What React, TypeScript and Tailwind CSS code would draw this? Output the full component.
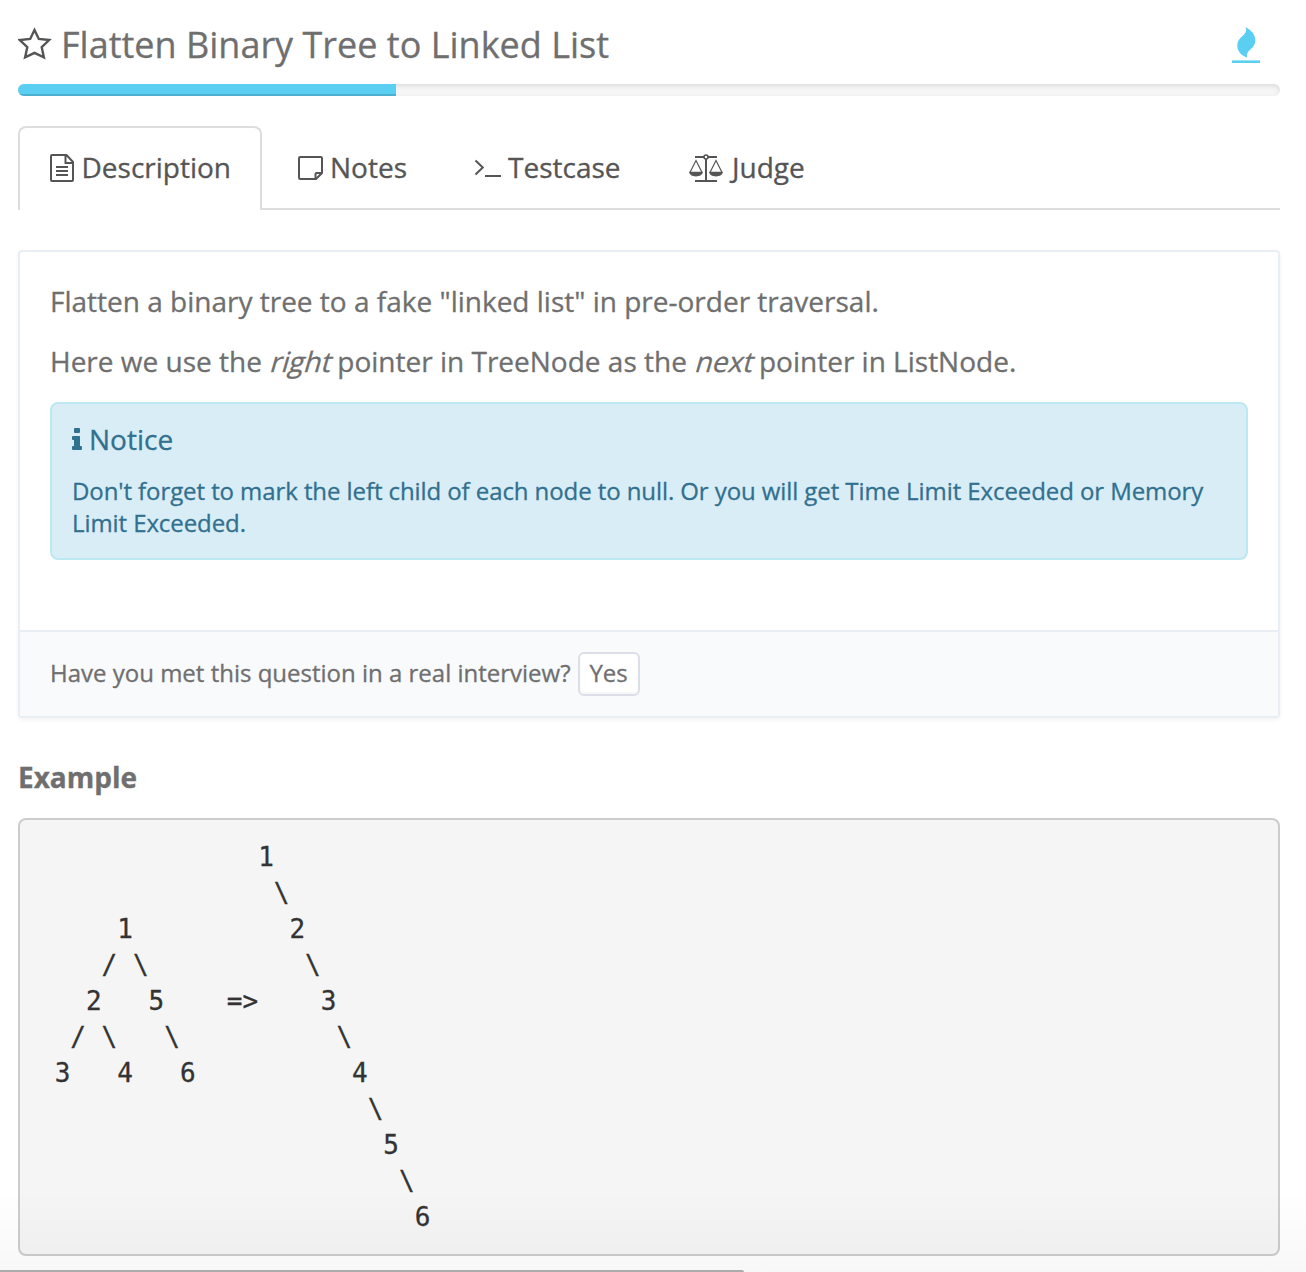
import type { ReactNode } from "react";

const diagram = [
  "              1",
  "               \\",
  "     1          2",
  "    / \\          \\",
  "   2   5    =>    3",
  "  / \\   \\          \\",
  " 3   4   6          4",
  "                     \\",
  "                      5",
  "                       \\",
  "                        6",
].join("\n");

function StarIcon() {
  return (
    <svg width="34" height="34" viewBox="0 0 34 34" fill="none" stroke="#555555" strokeWidth="2.4" className="shrink-0">
      <path d="M16.5 4 L20.8 12.9 L31.2 14 L23.7 21.2 L25.9 31.4 L16.5 26.8 L7.1 31.4 L9.3 21.2 L1.8 14 L12.2 12.9 Z" />
    </svg>
  );
}

function FlameIcon() {
  return (
    <svg width="28" height="38" viewBox="0 0 28 38" fill="#5bcff2">
      <path d="M13.4 1 C19 4.2 23.3 8.4 23.3 14.2 C23.3 18.7 21 21.2 18 23.8 C15.4 26 14.4 28.2 15.3 31.8 C9.2 29.3 5.3 25.5 5.3 19.5 C5.3 15 7.5 12.6 10.6 9.9 C14 7 14.9 4.8 13.4 1 Z" />
      <rect y="34.4" width="28" height="2.6" />
    </svg>
  );
}

function DocumentIcon() {
  return (
    <svg width="24" height="28" viewBox="0 0 24 28" fill="none" stroke="#555555" strokeWidth="2">
      <path d="M2 1 H16.5 L23 8 V26 Q23 27 22 27 H2 Q1 27 1 26 V2 Q1 1 2 1 Z M15.5 1 V9 H23" />
      <path d="M6 13 H18 M6 17 H18 M6 21 H18" />
    </svg>
  );
}

function NoteIcon() {
  return (
    <svg width="25" height="24" viewBox="0 0 25 24" fill="none" stroke="#555555" strokeWidth="2">
      <path d="M2.2 1 H22.8 Q24 1 24 2.2 V17 L18 23 H2.2 Q1 23 1 21.8 V2.2 Q1 1 2.2 1 Z" />
      <path d="M17.5 23 V18.3 Q17.5 17 18.8 17 H24" />
    </svg>
  );
}

function PromptIcon() {
  return (
    <svg width="27" height="18" viewBox="0 0 27 18" fill="none" stroke="#555555" strokeWidth="2">
      <path d="M1.5 1.5 L8.8 8.5 L1.5 15.5 M11 17 H27" />
    </svg>
  );
}

function ScaleIcon() {
  return (
    <svg width="34" height="28" viewBox="0 0 34 28" fill="none" stroke="#555555" strokeWidth="2">
      <path d="M6 3 H15 M19 3 H28 M17 5 V27 M6 27 H28" />
      <circle cx="17" cy="3" r="2" strokeWidth="1.6" />
      <path d="M1.2 18 L7 6.5 L12.8 18 M21.2 18 L27 6.5 L32.8 18" strokeWidth="1.2" />
      <path d="M0 17.7 H14 C13.6 20.6 10.8 22.4 7 22.4 C3.2 22.4 .4 20.6 0 17.7 Z M20 17.7 H34 C33.6 20.6 30.8 22.4 27 22.4 C23.2 22.4 20.4 20.6 20 17.7 Z" fill="#555555" stroke="none" />
    </svg>
  );
}

function InfoIcon() {
  return (
    <svg width="10" height="22" viewBox="0 0 10 22" fill="#31708f">
      <rect x="2" width="6" height="5" rx="1" />
      <path d="M1 8 H7.4 Q8 8 8 8.8 V18 H9 Q10 18 10 19 V21 Q10 22 9 22 H1 Q0 22 0 21 V19 Q0 18 1 18 H2 V12 H1 Q0 12 0 11 V9 Q0 8 1 8 Z" />
    </svg>
  );
}

function Tab({ icon, label, className }: { icon: ReactNode; label: string; className: string }) {
  return (
    <button className={`flex items-center whitespace-nowrap ${className}`}>
      {icon}
      <span className="-mt-[2px]">{label}</span>
    </button>
  );
}

function Slanted({ children }: { children: ReactNode }) {
  return <em className="inline-block origin-[50%_76%] -skew-x-[16deg] not-italic">{children}</em>;
}

export default function App() {
  return (
    <div className="relative h-[1272px] w-[1306px] overflow-hidden bg-white pr-[26px] pl-[18px] font-['Open_Sans',sans-serif] text-[#6f6f6f] [-webkit-text-stroke:0.3px]">
      <header className="flex h-[84px] items-start">
        <div className="flex pt-[26px]">
          <StarIcon />
        </div>
        <h1 className="ml-[9px] pt-[20px] text-[36px] leading-[50px] whitespace-nowrap">Flatten Binary Tree to Linked List</h1>
        <div className="mr-[20px] ml-auto pt-[26px]">
          <FlameIcon />
        </div>
      </header>

      <div className="h-3 overflow-hidden rounded-full bg-[#f5f5f5] shadow-[inset_0_2px_4px_rgba(0,0,0,0.1)]">
        <div className="h-full w-[378px] bg-[#5bcff2] shadow-[inset_0_-2px_0_rgba(0,0,0,0.15)]" />
      </div>

      <nav className="mt-[30px] flex h-[84px] text-[28px] leading-[40px] text-[#555555]">
        <Tab
          icon={<DocumentIcon />}
          label="Description"
          className="w-[244px] gap-[7.5px] rounded-t-lg border-2 border-b-0 border-[#dddddd] pb-[2px] pl-[30px]"
        />
        <div className="flex flex-1 border-b-2 border-[#dddddd] pt-[2px]">
          <Tab icon={<NoteIcon />} label="Notes" className="w-[176px] gap-[7px] pl-[36px]" />
          <Tab icon={<PromptIcon />} label="Testcase" className="w-[215px] gap-[7px] pl-[36px]" />
          <Tab icon={<ScaleIcon />} label="Judge" className="gap-[9px] pl-[36px]" />
        </div>
      </nav>

      <section className="mt-[40px] h-[468px] rounded-[4px] border-2 border-[#e9eef5] shadow-[0_2px_4px_rgba(0,0,0,0.05)]">
        <div className="h-[378px] px-[30px] pt-[29px] text-[28px] leading-[40px]">
          <p>Flatten a binary tree to a fake "linked list" in pre-order traversal.</p>
          <p className="mt-[20px]">
            Here we use the <Slanted>right</Slanted> pointer in TreeNode as the <Slanted>next</Slanted> pointer in ListNode.
          </p>
          <div className="mt-[21px] h-[158px] rounded-lg border-2 border-[#bce8f1] bg-[#d9edf7] px-[20px] pt-[15px] text-[#31708f]">
            <h2 className="flex items-center gap-[7px]">
              <InfoIcon />
              <span>Notice</span>
            </h2>
            <p className="mt-[16px] text-[24px] leading-[32px] tracking-[-0.085px]">
              Don't forget to mark the left child of each node to null. Or you will get Time Limit Exceeded or Memory
              <br />
              Limit Exceeded.
            </p>
          </div>
        </div>
        <div className="flex h-[86px] items-center gap-[7px] border-t-2 border-[#e9eef5] bg-[#f9fafc] px-[30px] text-[24px]">
          <span className="-mt-[2px] whitespace-nowrap">Have you met this question in a real interview?</span>
          <button className="h-[44px] w-[62px] rounded-md border-2 border-[#dcdee8] bg-white pb-[2px] leading-[38px] shadow-[inset_0_-2px_2px_rgba(0,0,0,0.04)]">
            Yes
          </button>
        </div>
      </section>

      <h2 className="mt-[39px] text-[28px] leading-[40px] font-bold">Example</h2>
      <pre className="mt-[21px] h-[438px] rounded-lg border-2 border-[#cccccc] bg-[#f5f5f5] p-[19px] font-['DejaVu_Sans_Mono',monospace] text-[26px] leading-[36px] text-[#333333]">
        {diagram}
      </pre>

      <div className="pointer-events-none absolute inset-x-0 bottom-0 h-[80px] bg-gradient-to-b from-transparent to-black/[0.03]" />
      <div className="absolute bottom-0 left-0 h-[2px] w-[744px] rounded-tr-[2px] bg-[#acacac]" />
    </div>
  );
}
